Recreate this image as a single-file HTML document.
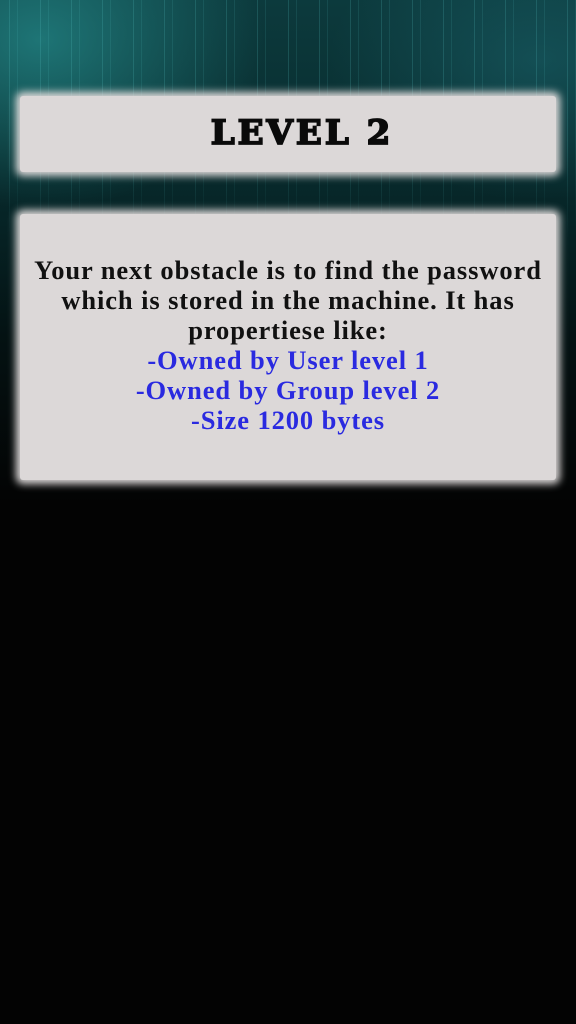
<!DOCTYPE html>
<html><head><meta charset="utf-8"><style>
html,body{margin:0;padding:0;width:576px;height:1024px;overflow:hidden;background:#030303}
.bg{position:absolute;left:0;top:0;width:576px;height:560px;
background:
radial-gradient(ellipse 320px 240px at 40px 40px,rgba(40,150,150,.65),transparent 70%),
radial-gradient(ellipse 300px 200px at 540px 60px,rgba(30,110,120,.45),transparent 70%),
linear-gradient(#0c3a3d 0%,#092e30 25%,#062325 40%,#041213 60%,#030303 90%);}
.lines{position:absolute;left:0;top:0;width:576px;height:240px;opacity:.35;
background:repeating-linear-gradient(90deg,transparent 0 9px,rgba(90,200,200,.55) 9px 10px,transparent 10px 17px,rgba(90,200,200,.35) 17px 18px,transparent 18px 31px);
-webkit-mask-image:linear-gradient(#000 60%,transparent);}
.box{position:absolute;background:#dcd8d8;box-shadow:0 0 8px 4px #dcd8d8;border-radius:3px}
.b1{left:20px;top:96px;width:536px;height:76px}
.b2{left:20px;top:214px;width:536px;height:266px}
.t{position:absolute;left:14px;width:576px;text-align:center;top:113px;font:bold 34px/40px "DejaVu Serif","Liberation Serif",serif;color:#0a0a0a;-webkit-text-stroke:1.8px #0a0a0a;letter-spacing:3px}
.p{position:absolute;left:0;width:576px;top:255px;text-align:center;font:bold 26.5px/30px "Liberation Serif","DejaVu Serif",serif;letter-spacing:0.9px;color:#111}
.blue{color:#2a2ae0}
</style></head><body>
<div class="bg"></div><div class="lines"></div>
<div class="box b1"></div><div class="box b2"></div>
<div class="t">LEVEL 2</div>
<div class="p">Your next obstacle is to find the password<br>which is stored in the machine. It has<br>propertiese like:<br><span class="blue">-Owned by User level 1<br>-Owned by Group level 2<br>-Size 1200 bytes</span></div>
</body></html>
